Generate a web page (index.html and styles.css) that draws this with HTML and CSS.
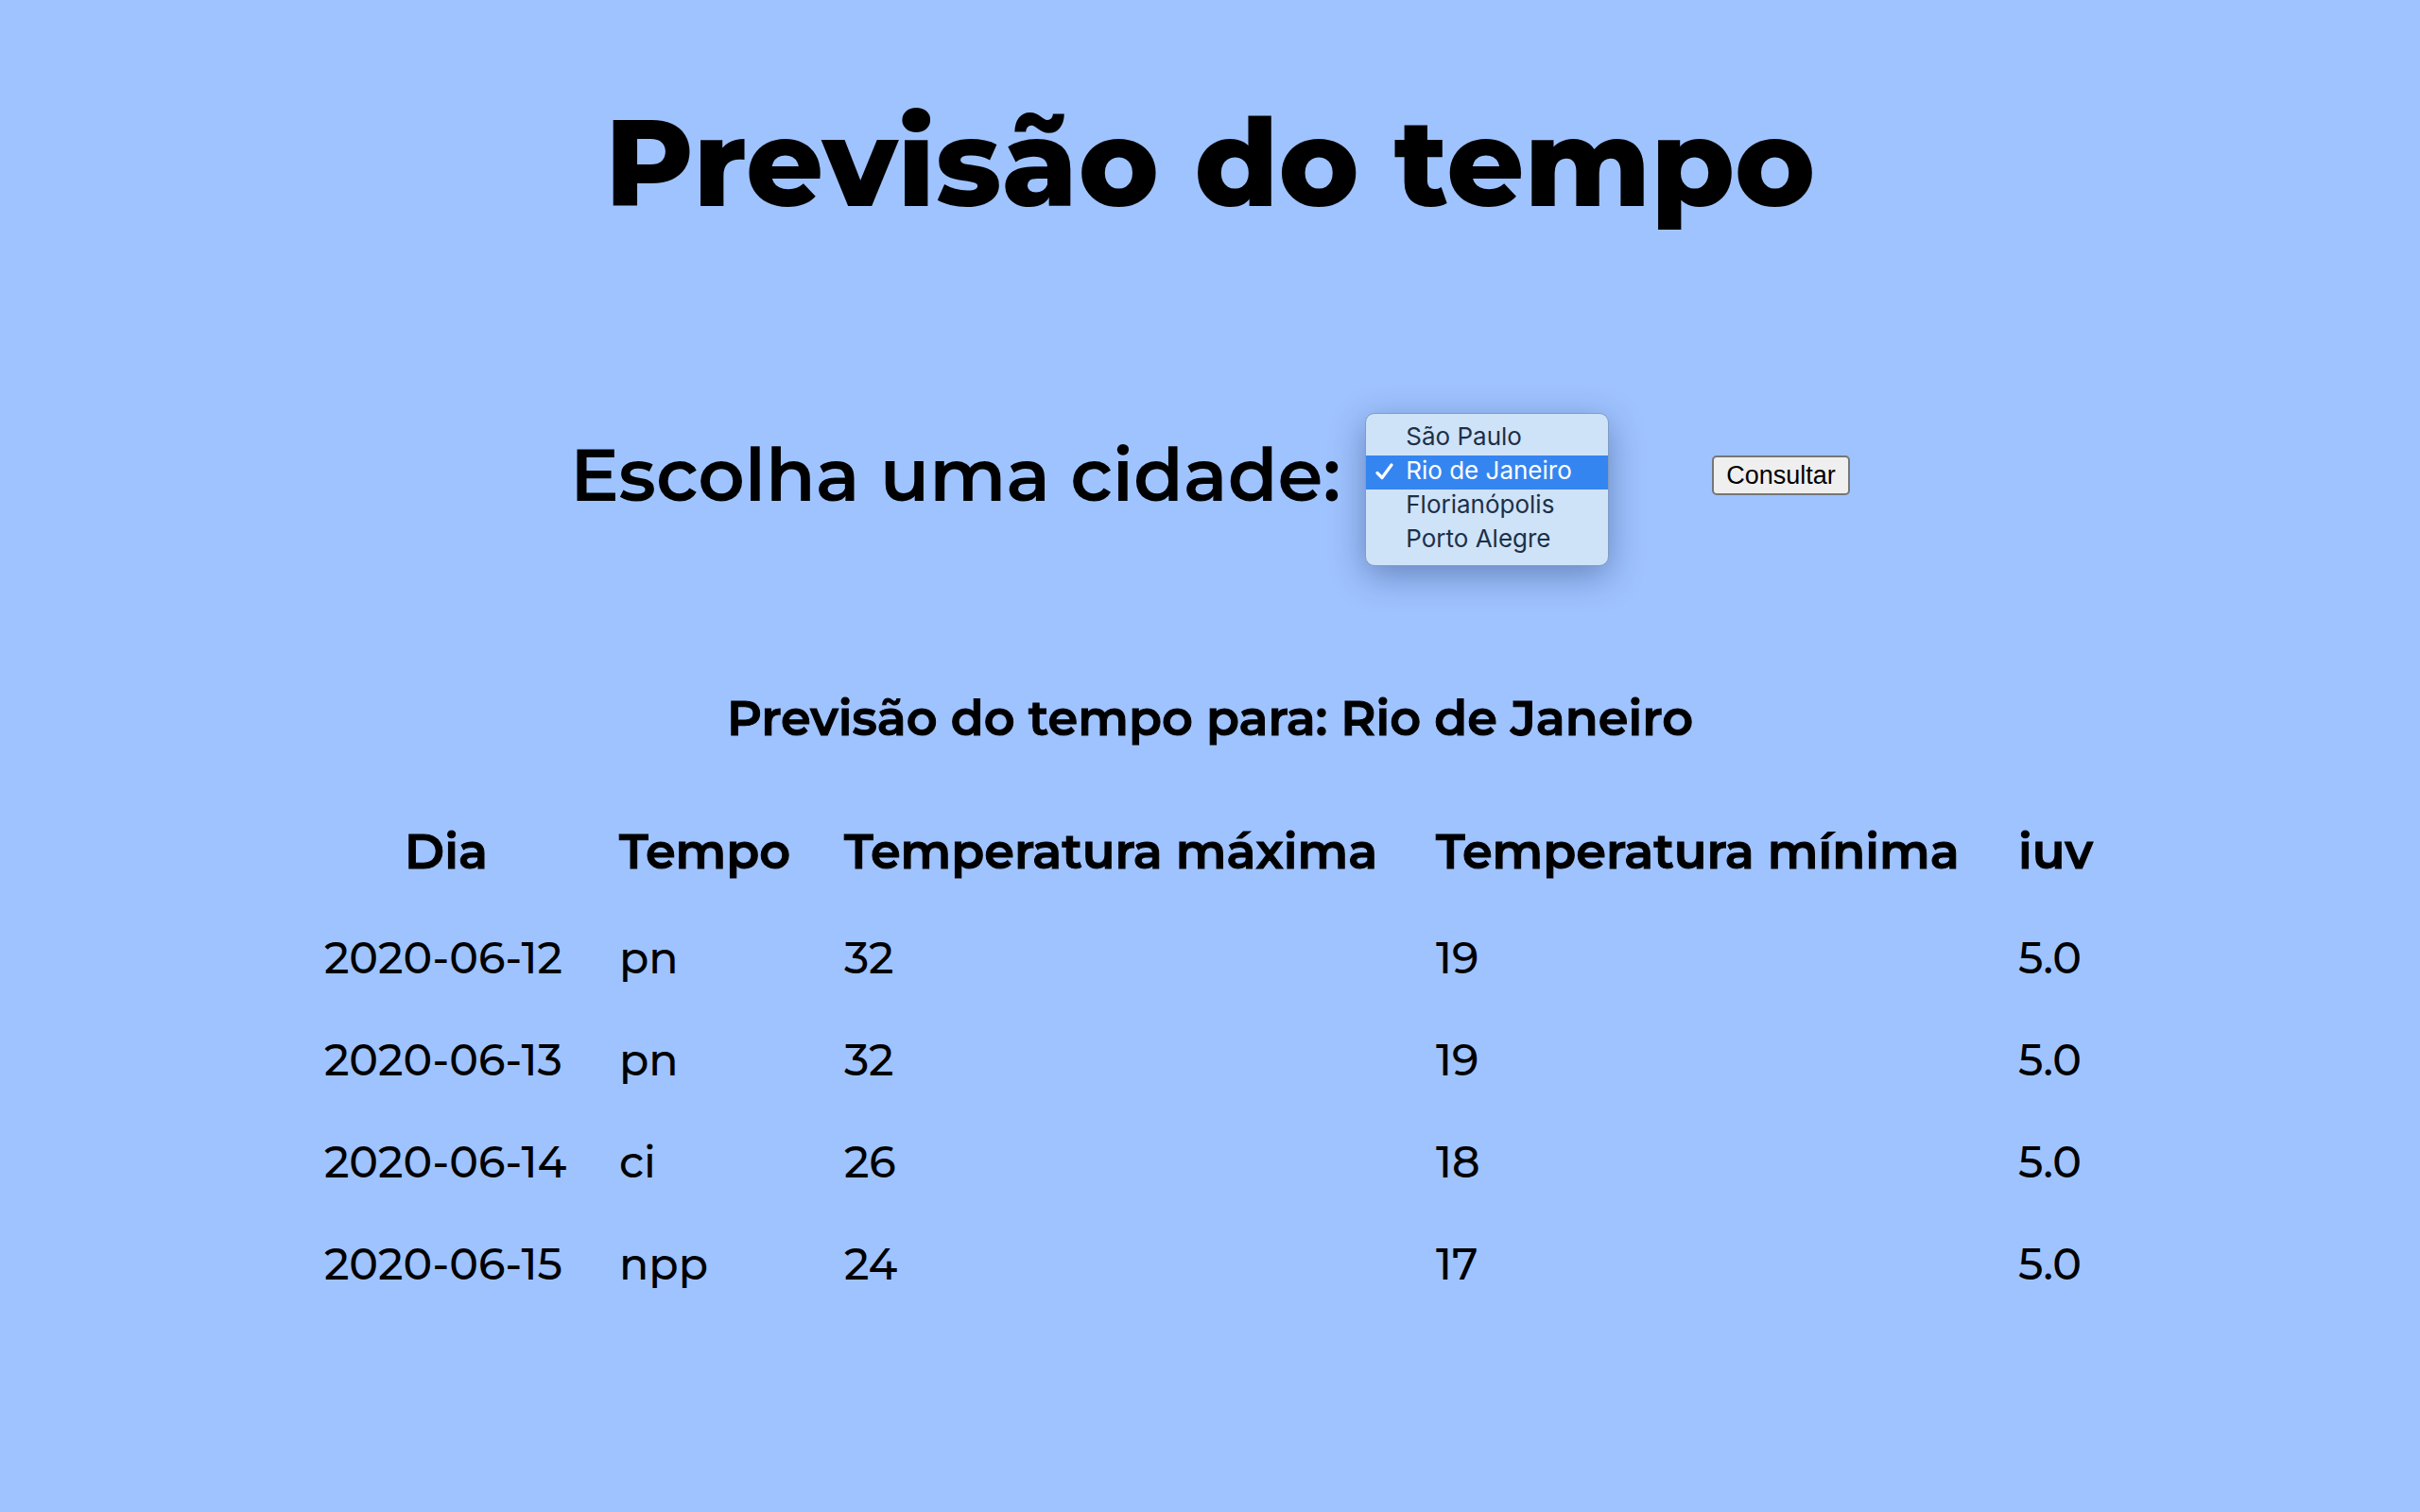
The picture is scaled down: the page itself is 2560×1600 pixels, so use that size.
FILE: index.html
```html
<!DOCTYPE html>
<html lang="pt-BR">
<head>
  <meta charset="utf-8">
  <meta name="viewport" content="width=device-width, initial-scale=1">
  <title>Previsão do tempo</title>
  <link rel="stylesheet" href="styles.css">
</head>
<body>
  <main class="page">
    <h1 class="title">Previsão do tempo</h1>

    <form class="search">
      <label class="search-label" for="cidade">Escolha uma cidade:</label>
      <div class="picker">
        <select class="city-list" id="cidade" name="cidade" size="4">
          <option>São Paulo</option>
          <option selected>Rio de Janeiro</option>
          <option>Florianópolis</option>
          <option>Porto Alegre</option>
        </select>
        <svg class="check" viewBox="0 0 20 18" aria-hidden="true">
          <path d="M2 10.500 L7 15.500 L17 2" fill="none" stroke="#fff" stroke-width="3.200" stroke-linecap="round" stroke-linejoin="round"/>
        </svg>
      </div>
      <button class="submit" type="button">Consultar</button>
    </form>

    <h2 class="subtitle">Previsão do tempo para: Rio de Janeiro</h2>

    <table class="forecast">
      <colgroup>
        <col class="col-day">
        <col class="col-weather">
        <col class="col-max">
        <col class="col-min">
        <col class="col-uv">
      </colgroup>
      <thead>
        <tr><th class="day" scope="col">Dia</th><th scope="col">Tempo</th><th scope="col">Temperatura máxima</th><th scope="col">Temperatura mínima</th><th scope="col">iuv</th></tr>
      </thead>
      <tbody>
        <tr><td>2020-06-12</td><td>pn</td><td>32</td><td>19</td><td>5.0</td></tr>
        <tr><td>2020-06-13</td><td>pn</td><td>32</td><td>19</td><td>5.0</td></tr>
        <tr><td>2020-06-14</td><td>ci</td><td>26</td><td>18</td><td>5.0</td></tr>
        <tr><td>2020-06-15</td><td>npp</td><td>24</td><td>17</td><td>5.0</td></tr>
      </tbody>
    </table>
  </main>
</body>
</html>
```
FILE: styles.css
```css
* {
  box-sizing: border-box;
}

body {
  margin: 0;
  min-height: 100vh;
  background: #9fc3ff;
  color: #000;
  font-family: Montserrat, Inter, sans-serif;
}

.page {
  display: flex;
  flex-direction: column;
  align-items: center;
  padding: 92px 24px;
}

.title {
  margin: 0;
  font-size: 128px;
  font-weight: 800;
  line-height: 160px;
}

.search {
  display: flex;
  align-items: flex-start;
  margin-top: 185px;
}

.search-label {
  padding-top: 15px;
  font-size: 77px;
  font-weight: 600;
  line-height: 100px;
}

.picker {
  position: relative;
  width: 258px;
  margin-left: 26px;
}

.city-list {
  display: block;
  width: 100%;
  height: 162px;
  padding: 8px 0;
  overflow: hidden;
  border: 1px solid #7f9dc4;
  border-radius: 10px;
  outline: 0;
  background: #cfe3f8;
  box-shadow: 0 10px 36px rgba(20, 40, 90, 0.4);
  color: #1c3048;
  font-family: Inter, sans-serif;
  font-size: 26px;
}

.city-list option {
  height: 36px;
  padding: 0 0 0 42px;
  line-height: 36px;
}

.city-list option:checked {
  background-image: linear-gradient(#3485f0, #3485f0);
  -webkit-text-fill-color: #fff;
}

.check {
  position: absolute;
  top: 53px;
  left: 11px;
  width: 20px;
  height: 18px;
}

.submit {
  height: 42px;
  margin: 45px 0 0 109px;
  padding: 0 13px;
  border: 2px solid #767676;
  border-radius: 5px;
  background: #efefef;
  color: #000;
  font-family: "Liberation Sans", Arial, sans-serif;
  font-size: 27px;
}

.subtitle {
  margin: 129px 0 0;
  font-size: 51px;
  font-weight: 600;
  line-height: 64px;
  -webkit-text-stroke: 1px #000;
}

.forecast {
  width: 1874px;
  max-width: 100%;
  margin-top: 51px;
  border-collapse: collapse;
  table-layout: fixed;
}

.col-day {
  width: 312px;
}

.col-weather {
  width: 238px;
}

.col-max {
  width: 626px;
}

.col-min {
  width: 616px;
}

.forecast th {
  height: 116px;
  padding: 0;
  font-size: 51px;
  font-weight: 600;
  text-align: left;
  white-space: nowrap;
  -webkit-text-stroke: 1px #000;
}

.forecast .day {
  padding-right: 54px;
  text-align: center;
}

.forecast td {
  height: 108px;
  padding: 0;
  font-size: 46px;
  font-weight: 500;
}
```
